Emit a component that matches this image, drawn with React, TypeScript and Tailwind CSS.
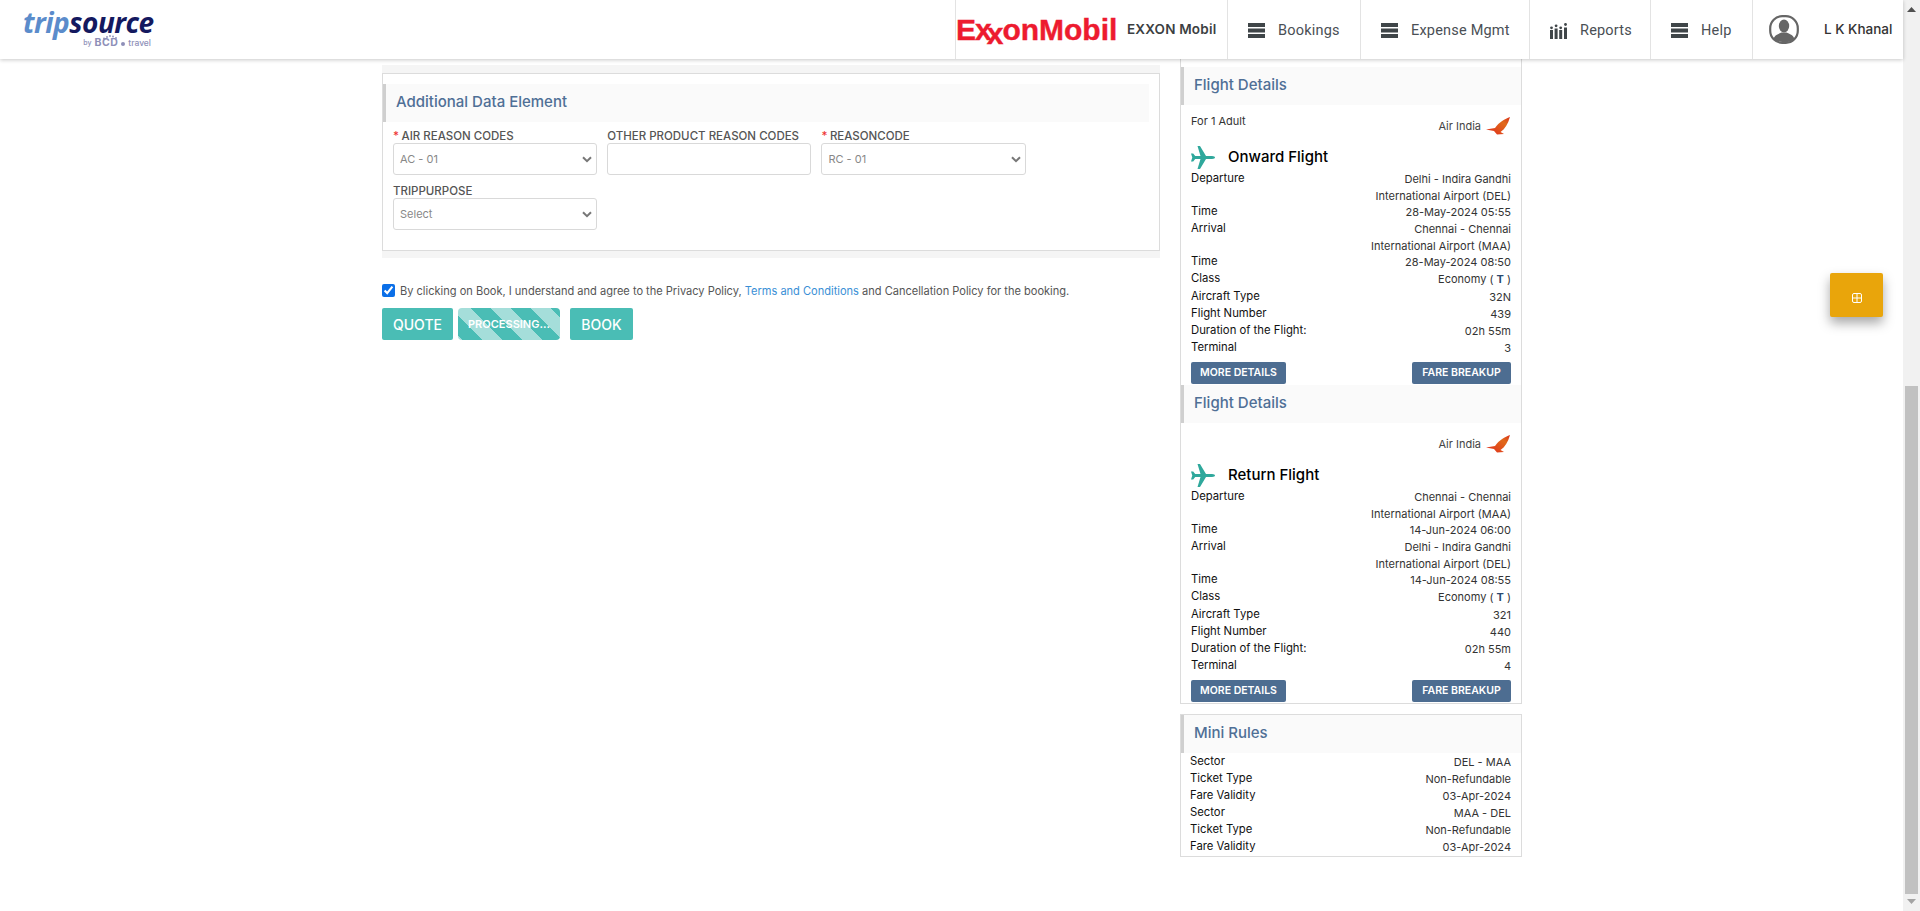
const FONT = "font-['Inter','Liberation_Sans',sans-serif]";

function Burger() {
  return (
    <svg width="17" height="15" viewBox="0 0 17 15" className="shrink-0">
      <rect width="17" height="4" fill="#3f4548" />
      <rect y="5.5" width="17" height="4" fill="#3f4548" />
      <rect y="11" width="17" height="4" fill="#3f4548" />
    </svg>
  );
}

function ReportsIcon() {
  return (
    <svg width="17" height="16" viewBox="0 0 17 16" className="shrink-0">
      <g fill="#3f4548">
        <rect x="0" y="7" width="3" height="9" />
        <rect x="4.6" y="5.500" width="3" height="10.500" />
        <rect x="9.200" y="7" width="3" height="9" />
        <rect x="14" y="4.500" width="3" height="11.500" />
        <circle cx="1.500" cy="4.800" r="1.400" />
        <circle cx="6.100" cy="2.800" r="1.400" />
        <circle cx="10.700" cy="4.800" r="1.400" />
        <circle cx="15.500" cy="1.500" r="1.400" />
      </g>
    </svg>
  );
}

function Avatar() {
  return (
    <svg width="30" height="29" viewBox="0 0 30 29" className="shrink-0">
      <rect x="1.200" y="1.200" width="27.600" height="26.600" rx="12" fill="#fff" stroke="#666" strokeWidth="2.200" />
      <ellipse cx="15" cy="11" rx="5.200" ry="6.400" fill="#666" />
      <path d="M4.500 24c1-4 5-5 8-6.500h5c3 1.500 7 2.500 8 6.500-2.500 2.500-5 3-10.500 3s-8-.5-10.500-3z" fill="#666" />
    </svg>
  );
}

function PlaneIcon() {
  return (
    <svg width="24" height="23" viewBox="0 0 24 23" className="shrink-0">
      <path
        d="M0 7.500 2.200 7.500 4.200 10 9.500 10 6.500 0 9 0 15 10 21 10C23 10 24 10.800 24 11.500 24 12.200 23 13 21 13L15 13 9 23 6.500 23 9.500 13 4.200 13 2.200 15.500 0 15.500 1.300 11.500Z"
        fill="#2fa89c"
      />
    </svg>
  );
}

function AirIndiaLogo() {
  return (
    <svg width="26" height="18" viewBox="0 0 26 18" className="shrink-0">
      <defs>
        <linearGradient id="ai" x1="0" y1="1" x2="1" y2="0">
          <stop offset="0" stopColor="#e02a1c" />
          <stop offset="0.7" stopColor="#e06a1a" />
          <stop offset="1" stopColor="#d9301c" />
        </linearGradient>
      </defs>
      <path d="M25 0C20 2 14 5 10 11L1 12.500 9 14 12 17.500 19 17 15.500 15C20 12 23 7 25 0Z" fill="url(#ai)" />
    </svg>
  );
}

function Chevron() {
  return (
    <svg width="10" height="7" viewBox="0 0 10 7" className="absolute right-[4px] top-[12px]">
      <path d="M1 1.200 5 5.200 9 1.200" fill="none" stroke="#777" strokeWidth="2" />
    </svg>
  );
}

function Field({ label, required, value, select = true }: { label: string; required?: boolean; value?: string; select?: boolean }) {
  return (
    <div className="w-[204.200px]">
      <div className="h-[17px] text-[11.500px] leading-[20px] font-medium text-[#555] whitespace-nowrap">
        {required && <span className="mr-[2.500px] text-[#e33]">*</span>}
        {label}
      </div>
      <div className="relative h-[32px] rounded-[3px] border border-[#d9d9d9] bg-white pl-[6px] text-[11px] leading-[30px] text-[#888]">
        {value}
        {select && <Chevron />}
      </div>
    </div>
  );
}

function PanelHead({ title }: { title: string }) {
  return (
    <div className="h-[38px] border-l-[3px] border-[#cfcfcf] bg-[#fafafa] pl-[10px] text-[15px] leading-[36px] font-medium text-[#4f6f96]">
      {title}
    </div>
  );
}

function Row({ label, value, tall, extra }: { label: string; value: React.ReactNode; tall?: boolean; extra?: boolean }) {
  return (
    <div className={`flex justify-between text-[11.300px] leading-[17px] text-[#111] ${tall ? "h-[33px]" : extra ? "h-[18px]" : "h-[17px]"}`}>
      <span className="whitespace-nowrap">{label}</span>
      <span className="w-[190px] pt-[1px] text-right text-[11px] leading-[16.500px] text-[#333]">{value}</span>
    </div>
  );
}

function Flight({ adult, title, rows }: { adult?: boolean; title: string; rows: [string, React.ReactNode, boolean?][] }) {
  return (
    <div>
      <PanelHead title="Flight Details" />
      <div className="px-[10px] pb-[1px]">
        <div className="flex h-[36px] justify-between pt-[8px]">
          <span className="text-[11px] leading-[17px] text-[#333]">{adult ? "For 1 Adult" : ""}</span>
          <span className="flex h-[26px] items-center gap-[4px] text-[11px] text-[#444]">
            Air India <AirIndiaLogo />
          </span>
        </div>
        <div className="flex h-[32px] items-center gap-[13px]">
          <PlaneIcon />
          <span className="text-[15px] font-medium text-black">{title}</span>
        </div>
        <div className="-mt-[3px]">
          {rows.map((r, i) => (
            <Row key={i} label={r[0]} value={r[1]} tall={r[2]} extra={r[0] === "Class"} />
          ))}
        </div>
        <div className="mt-[6px] flex justify-between">
          <button className="h-[22px] w-[95px] rounded-[2px] bg-[#4d6d91] text-[10.500px] font-semibold text-white">MORE DETAILS</button>
          <button className="h-[22px] w-[99px] rounded-[2px] bg-[#4d6d91] text-[10.500px] font-semibold text-white">FARE BREAKUP</button>
        </div>
      </div>
    </div>
  );
}

function NavItem({ icon, label, width }: { icon: React.ReactNode; label: string; width: string }) {
  return (
    <div className={`flex h-full items-center gap-[13px] border-l border-[#e3e3e3] pl-[20px] pt-[2px] ${width}`}>
      {icon}
      <span className="font-['Roboto',sans-serif] text-[14.500px] tracking-[0.2px] text-[#4a4f55] whitespace-nowrap">{label}</span>
    </div>
  );
}

const flight1: [string, React.ReactNode, boolean?][] = [
  ["Departure", <>Delhi - Indira Gandhi<br />International Airport (DEL)</>, true],
  ["Time", "28-May-2024 05:55"],
  ["Arrival", <>Chennai - Chennai<br />International Airport (MAA)</>, true],
  ["Time", "28-May-2024 08:50"],
  ["Class", <>Economy ( <b className="text-[#2b4a6f]">T</b> )</>],
  ["Aircraft Type", "32N"],
  ["Flight Number", "439"],
  ["Duration of the Flight:", "02h 55m"],
  ["Terminal", "3"],
];

const flight2: [string, React.ReactNode, boolean?][] = [
  ["Departure", <>Chennai - Chennai<br />International Airport (MAA)</>, true],
  ["Time", "14-Jun-2024 06:00"],
  ["Arrival", <>Delhi - Indira Gandhi<br />International Airport (DEL)</>, true],
  ["Time", "14-Jun-2024 08:55"],
  ["Class", <>Economy ( <b className="text-[#2b4a6f]">T</b> )</>],
  ["Aircraft Type", "321"],
  ["Flight Number", "440"],
  ["Duration of the Flight:", "02h 55m"],
  ["Terminal", "4"],
];

const rules: [string, string][] = [
  ["Sector", "DEL - MAA"],
  ["Ticket Type", "Non-Refundable"],
  ["Fare Validity", "03-Apr-2024"],
  ["Sector", "MAA - DEL"],
  ["Ticket Type", "Non-Refundable"],
  ["Fare Validity", "03-Apr-2024"],
];

export default function App() {
  return (
    <div className={`relative flex h-[911px] w-full overflow-hidden bg-white ${FONT}`}>
      <div className="min-w-0 flex-1">
        <header className="relative z-10 flex h-[59px] items-start justify-between bg-white shadow-[0_1px_4px_rgba(0,0,0,0.22)]">
          <div className="ml-[23px] w-[134px] pt-[8px]">
            <div className="h-[28px] font-['Open_Sans',sans-serif] text-[28px] leading-[28px] font-bold italic tracking-[-0.5px] whitespace-nowrap">
              <span className="text-[#5b8ccb]">trip</span>
              <span className="text-[#14195f]">source</span>
            </div>
            <div className="flex items-end justify-end gap-[3px] pr-[6px] pt-[2px] text-[7px] leading-[10px] font-medium text-[#8e8fb8]">
              <span>by</span>
              <span className="relative text-[10.500px] font-bold tracking-[0.5px]">
                BCD
                <svg width="16" height="5" viewBox="0 0 16 5" className="absolute -top-[3px] left-[8px]">
                  <g fill="#8e8fb8">
                    <circle cx="2" cy="3.500" r=".9" /><circle cx="5" cy="2" r=".9" /><circle cx="8" cy="1" r=".9" /><circle cx="11" cy="1.500" r=".9" /><circle cx="14" cy="3" r=".9" />
                  </g>
                </svg>
              </span>
              <span className="mb-[2px] h-[4px] w-[4px] rounded-full bg-[#8e8fb8]" />
              <span className="text-[8.500px]">travel</span>
            </div>
          </div>
          <div className="flex h-full items-center">
            <div className="flex h-full w-[272px] items-center border-l border-[#e3e3e3]">
              <div className="flex w-[171px] items-start font-['Liberation_Sans',sans-serif] text-[30px] leading-none font-bold text-[#ed1b2f] [-webkit-text-stroke:0.4px_#ed1b2f] whitespace-nowrap">
                <span>E</span>
                <span className="-ml-[1px]">x</span>
                <span className="-ml-[5px] translate-y-[4px]">x</span>
                <span className="-ml-[1px]">onMobil</span>
              </div>
              <div className="text-[13.500px] font-semibold tracking-[0.2px] text-[#3c3f42] whitespace-nowrap">EXXON Mobil</div>
            </div>
            <NavItem icon={<Burger />} label="Bookings" width="w-[133px]" />
            <NavItem icon={<Burger />} label="Expense Mgmt" width="w-[169px]" />
            <NavItem icon={<ReportsIcon />} label="Reports" width="w-[121px]" />
            <NavItem icon={<Burger />} label="Help" width="w-[102px]" />
            <div className="flex h-full w-[151px] items-center gap-[25px] border-l border-[#e3e3e3] pl-[16px]">
              <Avatar />
              <span className="text-[13.500px] font-medium text-[#333] whitespace-nowrap">L K Khanal</span>
            </div>
          </div>
        </header>

        <main className="flex pl-[382px]">
          <section className="w-[778px] pt-[6px]">
            <div className="bg-[#f5f5f5] pt-[8px] pb-[7px]">
              <div className="h-[178px] border border-[#dcdcdc] bg-white pt-[10px] pr-[10px]">
                <PanelHead title="Additional Data Element" />
                <div className="flex gap-[10px] pl-[10px] pt-[4px]">
                  <Field required label="AIR REASON CODES" value="AC - 01" />
                  <Field label="OTHER PRODUCT REASON CODES" select={false} />
                  <Field required label="REASONCODE" value="RC - 01" />
                </div>
                <div className="flex pl-[10px] pt-[6px]">
                  <Field label="TRIPPURPOSE" value="Select" />
                </div>
              </div>
            </div>
            <div className="mt-[26px] flex h-[13px] items-center gap-[5px] text-[11.050px] text-[#555]">
              <input type="checkbox" defaultChecked className="m-0 h-[13px] w-[13px] accent-[#0b6fe8]" />
              <span className="pt-[2px] whitespace-nowrap">
                By clicking on Book, I understand and agree to the Privacy Policy, <span className="text-[#3a8fd6]">Terms and Conditions</span> and Cancellation Policy for the booking.
              </span>
            </div>
            <div className="mt-[11px] flex h-[32px] text-[14px] font-medium text-white">
              <button className="w-[71px] rounded-[2px] bg-[#4abdb5]">QUOTE</button>
              <button className="ml-[5px] w-[102px] rounded-[4px] bg-[#4abdb5] bg-[linear-gradient(45deg,rgba(255,255,255,.5)_25%,transparent_25%,transparent_50%,rgba(255,255,255,.5)_50%,rgba(255,255,255,.5)_75%,transparent_75%,transparent)] bg-[length:40px_40px] bg-[position:-7px_0] text-[11px] font-semibold">PROCESSING...</button>
              <button className="ml-[10px] w-[63px] rounded-[2px] bg-[#4abdb5]">BOOK</button>
            </div>
          </section>

          <aside className="ml-[20px] w-[342px]">
            <div className="border-x border-b border-[#dcdcdc] pt-[8px]">
              <Flight adult title="Onward Flight" rows={flight1} />
              <Flight title="Return Flight" rows={flight2} />
            </div>
            <div className="mt-[10px] border border-[#dcdcdc]">
              <PanelHead title="Mini Rules" />
              <div className="pl-[9px] pr-[10px] pb-[1px]">
                {rules.map((r, i) => (
                  <Row key={i} label={r[0]} value={r[1]} />
                ))}
              </div>
            </div>
          </aside>
        </main>
      </div>

      <div className="flex w-[17px] shrink-0 flex-col items-center bg-[#f1f1f1]">
        <svg width="9" height="5" viewBox="0 0 9 5" className="mt-[7px]"><path d="M4.500 0 9 5H0Z" fill="#505050" /></svg>
        <div className="mt-[374px] h-[508px] w-[13px] bg-[#c1c1c1]" />
        <svg width="9" height="5" viewBox="0 0 9 5" className="mt-[5px]"><path d="M4.500 5 9 0H0Z" fill="#a3a3a3" /></svg>
      </div>

      <div className="absolute left-[1830px] top-[273px] flex h-[44px] w-[53px] items-center justify-center rounded-[2px] bg-[#e9a50b] pt-[5px] shadow-[0_6px_12px_rgba(0,0,0,0.35)]">
        <svg width="10" height="10" viewBox="0 0 10 10">
          <rect x=".5" y=".5" width="9" height="9" rx="1.500" fill="none" stroke="#fff" />
          <path d="M5 1v8M1 5h8" stroke="#fff" />
        </svg>
      </div>
    </div>
  );
}
